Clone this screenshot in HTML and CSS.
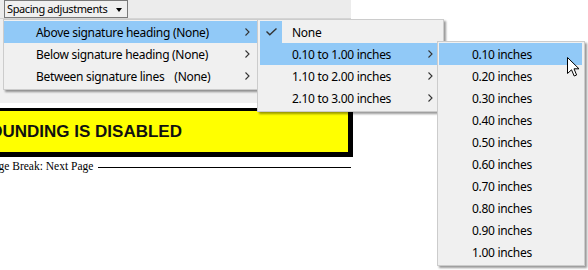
FILE: index.html
```html
<!DOCTYPE html>
<html lang="en">
<head>
  <meta charset="UTF-8">
  <title>Spacing adjustments</title>
  <link rel="stylesheet" href="styles.css">
</head>
<body>
  <div class="doc">
    <div class="toolbar">
      <div class="dropdown">Spacing adjustments <span class="caret"></span></div>
    </div>
    <div class="panel"></div>
    <div class="notice">ROUNDING IS DISABLED</div>
    <div class="pagebreak">
      <span>Page Break: Next Page</span>
      <div class="rule"></div>
    </div>
  </div>

  <!-- first level -->
  <div class="menu menu-main">
    <div class="item active"><span class="label">Above signature heading (None)</span><svg class="chev" width="5" height="8"><path d="M0.5 0.5 L4 4 L0.5 7.5" /></svg></div>
    <div class="item"><span class="label">Below signature heading (None)</span><svg class="chev" width="5" height="8"><path d="M0.5 0.5 L4 4 L0.5 7.5" /></svg></div>
    <div class="item"><span class="label">Between signature lines<span class="gap"></span>(None)</span><svg class="chev" width="5" height="8"><path d="M0.5 0.5 L4 4 L0.5 7.5" /></svg></div>
  </div>

  <!-- second level -->
  <div class="menu menu-range">
    <div class="item"><span class="check"><svg width="11" height="8"><path d="M0.5 3.5 L3.8 6.8 L10.5 0.5" /></svg></span><span class="label">None</span></div>
    <div class="item active"><span class="check"></span><span class="label">0.10 to 1.00 inches</span><svg class="chev" width="5" height="8"><path d="M0.5 0.5 L4 4 L0.5 7.5" /></svg></div>
    <div class="item"><span class="check"></span><span class="label">1.10 to 2.00 inches</span><svg class="chev" width="5" height="8"><path d="M0.5 0.5 L4 4 L0.5 7.5" /></svg></div>
    <div class="item"><span class="check"></span><span class="label">2.10 to 3.00 inches</span><svg class="chev" width="5" height="8"><path d="M0.5 0.5 L4 4 L0.5 7.5" /></svg></div>
  </div>

  <!-- third level -->
  <div class="menu menu-values">
    <div class="item active"><span class="label">0.10 inches</span></div>
    <div class="item"><span class="label">0.20 inches</span></div>
    <div class="item"><span class="label">0.30 inches</span></div>
    <div class="item"><span class="label">0.40 inches</span></div>
    <div class="item"><span class="label">0.50 inches</span></div>
    <div class="item"><span class="label">0.60 inches</span></div>
    <div class="item"><span class="label">0.70 inches</span></div>
    <div class="item"><span class="label">0.80 inches</span></div>
    <div class="item"><span class="label">0.90 inches</span></div>
    <div class="item"><span class="label">1.00 inches</span></div>
  </div>

  <svg class="cursor" width="13" height="20" viewBox="0 0 13 20">
    <path d="M0.5 0.5 L0.5 16.5 L4.5 12.8 L7.2 19 L9.6 18 L7 11.8 L12 11.8 Z" />
  </svg>
</body>
</html>
```

FILE: styles.css
```css
body {
  margin: 0;
  background: #fff;
  font-family: "Noto Sans", sans-serif;
  font-size: 12px;
  letter-spacing: -0.3px;
  color: #000;
  overflow: hidden;
}

.doc {
  width: 351px;
}

.toolbar {
  height: 19px;
  background: #ececec;
  border-bottom: 1px solid #d4d4d4;
  box-sizing: border-box;
  padding-left: 4px;
}

.dropdown {
  display: inline-flex;
  align-items: center;
  gap: 9px;
  height: 18px;
  box-sizing: border-box;
  margin-top: -1px;
  padding: 0 5px 0 2px;
  border: 1px solid #7a7a7a;
  background: #f0f0f0;
  font-size: 11px;
  letter-spacing: -0.4px;
  line-height: 16px;
}

.caret {
  width: 0;
  height: 0;
  border-left: 3.5px solid transparent;
  border-right: 3.5px solid transparent;
  border-top: 4px solid #000;
  margin-top: 2px;
}

.panel {
  height: 84px;
  background: #f0f0f0;
}

.notice {
  margin: 5px 0 0 -40px;
  height: 47px;
  box-sizing: border-box;
  border: 3px solid #000;
  box-shadow: 2px 2px 0 #000;
  background: #ffff00;
  padding-left: 14px;
  font-family: "Liberation Sans", Arial, sans-serif;
  font-weight: bold;
  font-size: 17px;
  letter-spacing: 0;
  line-height: 41px;
  color: #111;
}

.pagebreak {
  display: flex;
  align-items: center;
  gap: 5px;
  margin: 4px 0 0 -13px;
  font-family: "Liberation Serif", "Times New Roman", serif;
  font-size: 11.5px;
  letter-spacing: 0;
  line-height: 14px;
}

.pagebreak .rule {
  flex: 1;
  height: 1px;
  background: #000;
  margin-top: 3px;
}

/* popup menus */
.menu {
  position: absolute;
  background: #f0f0f0;
  border: 1px solid #cccccc;
  box-shadow: 2px 2px 2px rgba(0, 0, 0, 0.4);
  padding: 1px 0 2px;
}

.item {
  display: flex;
  align-items: center;
  height: 22px;
  white-space: nowrap;
}

.item.active {
  background: #91c9f7;
}

.chev {
  margin-left: auto;
}

.chev path {
  fill: none;
  stroke: #333;
  stroke-width: 1.1;
}

.gap {
  display: inline-block;
  width: 10px;
}

.menu-main {
  left: 3px;
  top: 19px;
  width: 254px;
}

.menu-main .label {
  padding-left: 32px;
}

.menu-main .chev {
  margin-right: 8px;
}

.menu-range {
  left: 257px;
  top: 19px;
  width: 181px;
  padding-left: 2px;
  padding-right: 2px;
}

.check {
  width: 22px;
  height: 22px;
  display: flex;
  align-items: center;
  justify-content: center;
  margin-right: 10px;
}

.item:first-child .check {
  background: #91c9f7;
}

.check path {
  fill: none;
  stroke: #333;
  stroke-width: 1.4;
}

.menu-range .chev {
  margin-right: 8px;
}

.menu-values {
  left: 437px;
  top: 41px;
  width: 143px;
  padding-left: 1px;
  padding-right: 2px;
}

.menu-values .label {
  padding-left: 33px;
}

.cursor {
  position: absolute;
  left: 567px;
  top: 57px;
}

.cursor path {
  fill: #fff;
  stroke: #000;
  stroke-width: 1;
}
```
